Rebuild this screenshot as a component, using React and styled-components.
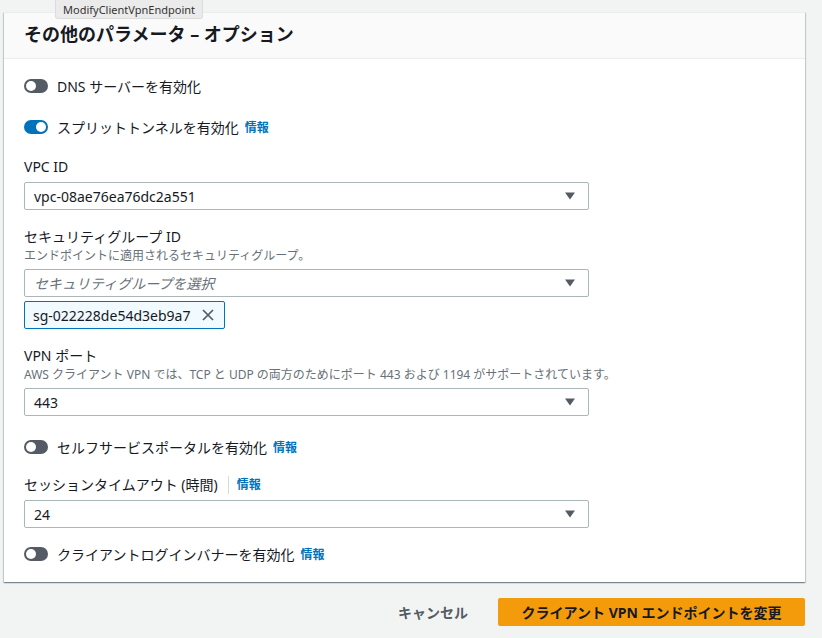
import React from "react";
import styled, { createGlobalStyle } from "styled-components";

const colors = {
  page: "#f2f3f3",
  text: "#16191f",
  grey: "#687078",
  dark: "#545b64",
  blue: "#0073bb",
  border: "#aab7b8",
  divider: "#eaeded",
  orange: "#f49b0c"
};

const GlobalStyle = createGlobalStyle`
  html, body {
    margin: 0;
    padding: 0;
    background: ${colors.page};
    font-family: "Noto Sans", "Noto Sans CJK JP", sans-serif;
    color: ${colors.text};
  }
  * { box-sizing: border-box; }
`;

const Page = styled.div`
  position: relative;
  width: 822px;
  height: 638px;
  padding: 12px 0 0 4px;
  background: ${colors.page};
`;

const Tooltip = styled.div`
  position: absolute;
  left: 55px;
  top: 0;
  height: 19px;
  padding: 0 7px;
  display: flex;
  align-items: center;
  font-size: 11px;
  color: #333;
  background: #ebebeb;
  border: 1px solid #dcdcdc;
  border-top: none;
  border-radius: 0 0 3px 3px;
  z-index: 2;
`;

const Panel = styled.div`
  width: 801px;
  background: white;
  border-top: 1px solid ${colors.divider};
  box-shadow: 0 1px 1px 0 rgba(0, 28, 36, 0.3),
    1px 1px 1px 0 rgba(0, 28, 36, 0.15), -1px 1px 1px 0 rgba(0, 28, 36, 0.15);
`;

const Header = styled.div`
  height: 46px;
  display: flex;
  align-items: center;
  padding: 0 20px 4px;
  background: #fafafa;
  border-bottom: 1px solid ${colors.divider};
`;

const Title = styled.h2`
  margin: 0;
  font-size: 18px;
  font-weight: 700;
  line-height: 22px;
`;

const Body = styled.div`
  display: flex;
  flex-direction: column;
  padding: 17px 20px 18px;
`;

const ToggleRow = styled.div`
  display: flex;
  align-items: center;
  height: 20px;
  margin-top: ${p => p.$mt || 0}px;
  font-size: 14px;
`;

const Switch = styled.span`
  position: relative;
  width: 24px;
  height: 14px;
  border-radius: 7px;
  margin-right: 9px;
  flex-shrink: 0;
  background: ${p => (p.$on ? colors.blue : colors.dark)};
  &::after {
    content: "";
    position: absolute;
    top: 2px;
    left: ${p => (p.$on ? "12px" : "2px")};
    width: 10px;
    height: 10px;
    border-radius: 50%;
    background: white;
  }
`;

const Info = styled.span`
  margin-left: ${p => (p.$flush ? 0 : 6)}px;
  font-size: 12px;
  font-weight: 700;
  color: ${colors.blue};
`;

const Field = styled.div`
  display: flex;
  flex-direction: column;
  margin-top: ${p => p.$mt || 0}px;
`;

const Label = styled.div`
  display: flex;
  align-items: center;
  font-size: 14px;
  line-height: 22px;
  margin-top: 1px;
`;

const LabelDivider = styled.span`
  width: 1px;
  height: 18px;
  background: #d5dbdb;
  margin: 0 8px 0 10px;
`;

const Description = styled.div`
  font-size: 12px;
  line-height: 16px;
  color: ${colors.grey};
`;

const Select = styled.div`
  width: 565px;
  height: 28px;
  margin-top: ${p => (p.$afterDesc ? 5 : 4)}px;
  display: flex;
  align-items: center;
  justify-content: space-between;
  padding: 0 12px 0 9px;
  border: 1px solid ${colors.border};
  border-radius: 2px;
  font-size: 14px;
  color: ${p => (p.$placeholder ? colors.grey : colors.text)};
  font-style: ${p => (p.$placeholder ? "italic" : "normal")};
`;

const Token = styled.div`
  align-self: flex-start;
  margin-top: 4px;
  height: 28px;
  display: flex;
  align-items: center;
  padding: 0 8px;
  font-size: 14px;
  background: #f1faff;
  border: 1px solid ${colors.blue};
  border-radius: 2px;
`;

const Footer = styled.div`
  display: flex;
  justify-content: flex-end;
  align-items: center;
  width: 801px;
  margin-top: 16px;
  gap: 30px;
`;

const LinkButton = styled.span`
  font-size: 14px;
  font-weight: 700;
  color: ${colors.dark};
`;

const PrimaryButton = styled.div`
  width: 307px;
  height: 28px;
  display: flex;
  align-items: center;
  justify-content: center;
  font-size: 14px;
  font-weight: 700;
  background: ${colors.orange};
  border-radius: 2px;
  color: ${colors.text};
`;

const Caret = () => (
  <svg width="12" height="8" viewBox="0 0 12 8">
    <path d="M1 0.5h10L6 7.5z" fill={colors.dark} />
  </svg>
);

const Dismiss = () => (
  <svg width="16" height="16" viewBox="0 0 16 16" style={{ marginLeft: 10 }}>
    <path
      d="M3 3l10 10M13 3L3 13"
      stroke={colors.dark}
      strokeWidth="1.7"
      fill="none"
    />
  </svg>
);

const Toggle = ({ on, mt, children, info }) => (
  <ToggleRow $mt={mt}>
    <Switch $on={on} />
    {children}
    {info && <Info>情報</Info>}
  </ToggleRow>
);

const App = () => (
  <Page>
    <GlobalStyle />
    <Tooltip>ModifyClientVpnEndpoint</Tooltip>
    <Panel>
      <Header>
        <Title>その他のパラメータ – オプション</Title>
      </Header>
      <Body>
        <Toggle>DNS サーバーを有効化</Toggle>
        <Toggle on mt={21} info>
          スプリットトンネルを有効化
        </Toggle>

        <Field $mt={18}>
          <Label>VPC ID</Label>
          <Select>
            vpc-08ae76ea76dc2a551
            <Caret />
          </Select>
        </Field>

        <Field $mt={15}>
          <Label>セキュリティグループ ID</Label>
          <Description>エンドポイントに適用されるセキュリティグループ。</Description>
          <Select $afterDesc $placeholder>
            セキュリティグループを選択
            <Caret />
          </Select>
          <Token>
            sg-022228de54d3eb9a7
            <Dismiss />
          </Token>
        </Field>

        <Field $mt={15}>
          <Label>VPN ポート</Label>
          <Description>
            AWS クライアント VPN では、TCP と UDP の両方のためにポート 443 および 1194 がサポートされています。
          </Description>
          <Select $afterDesc>
            443
            <Caret />
          </Select>
        </Field>

        <Toggle mt={21} info>
          セルフサービスポータルを有効化
        </Toggle>

        <Field $mt={16}>
          <Label>
            セッションタイムアウト (時間)
            <LabelDivider />
            <Info $flush>情報</Info>
          </Label>
          <Select>
            24
            <Caret />
          </Select>
        </Field>

        <Toggle mt={16} info>
          クライアントログインバナーを有効化
        </Toggle>
      </Body>
    </Panel>
    <Footer>
      <LinkButton>キャンセル</LinkButton>
      <PrimaryButton>クライアント VPN エンドポイントを変更</PrimaryButton>
    </Footer>
  </Page>
);

export default App;
